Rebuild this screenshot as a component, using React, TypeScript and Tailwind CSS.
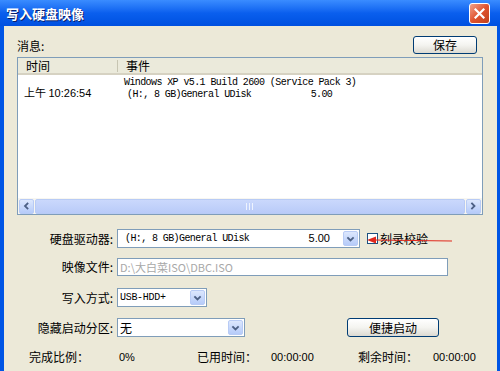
import React from 'react';

const cjk = { fontFamily: '"Noto Sans CJK SC", "Liberation Sans", sans-serif' };
const mono = { fontFamily: '"Liberation Mono", "Noto Sans CJK SC", monospace' };
const tahoma = { fontFamily: '"Liberation Sans", "Noto Sans CJK SC", sans-serif' };

const Chevron = ({ dir = 'down' }: { dir?: 'down' | 'left' | 'right' }) => {
    const d = dir === 'down' ? 'M2 3 L4.5 5.5 L7 3' : dir === 'left' ? 'M5.5 1.5 L3 4 L5.5 6.5' : 'M3 1.5 L5.5 4 L3 6.5';
    return (
        <svg width="9" height="8" viewBox="0 0 9 8">
            <path d={d} fill="none" stroke="#4d6185" strokeWidth="1.8" strokeLinecap="square" />
        </svg>
    );
};

const DropButton = () => (
    <div className="mr-[1px] flex h-[15px] w-[15px] shrink-0 items-center justify-center rounded-[2px] border border-[#b8cbf5] bg-gradient-to-b from-[#dce7fd] to-[#b6cbf9]">
        <Chevron />
    </div>
);

const Combo = ({ width, children }: { width: string; children: React.ReactNode }) => (
    <div className={`flex h-[19px] ${width} items-center border border-[#7f9db9] bg-white pl-[2px]`}>
        <div className="flex flex-1 items-center">{children}</div>
        <DropButton />
    </div>
);

const XPButton = ({ label, className }: { label: string; className: string }) => (
    <div
        style={cjk}
        className={`flex items-center justify-center rounded-[3px] border border-[#003c74] bg-gradient-to-b from-[#ffffff] via-[#f4f4f0] to-[#dcdad2] text-[12px] leading-none text-black ${className}`}
    >
        {label}
    </div>
);

const Label = ({ text }: { text: string }) => (
    <div style={cjk} className="w-[96px] pr-[4px] text-right text-[12px] leading-none text-black">
        {text}
    </div>
);

export default function App() {
    return (
        <div className="flex h-[371px] w-[500px] flex-col overflow-hidden bg-[#0055e5]">
            {/* title bar */}
            <div className="flex h-[26px] shrink-0 items-center bg-gradient-to-b from-[#3a8cff] via-[#0a5fee] to-[#0050e0] pl-[6px] pr-[10px]">
                <span style={cjk} className="text-[13px] font-bold leading-none text-white [text-shadow:1px_1px_0_#0a1e6a]">
                    写入硬盘映像
                </span>
                <div className="ml-auto flex h-[21px] w-[21px] items-center justify-center rounded-[3px] border border-white bg-gradient-to-br from-[#f0a088] via-[#e0532e] to-[#c0401c]">
                    <svg width="11" height="11" viewBox="0 0 11 11">
                        <path d="M1.5 1.5 L9.5 9.5 M9.5 1.5 L1.5 9.5" stroke="white" strokeWidth="2.2" strokeLinecap="square" />
                    </svg>
                </div>
            </div>

            {/* body */}
            <div className="relative ml-[4px] mr-[3px] flex flex-1 flex-col bg-[#ece9d8] pl-[13px]">
                <div className="mt-[10px] flex h-[18px] items-center">
                    <span style={cjk} className="mt-[2px] text-[12px] leading-none text-black">消息:</span>
                    <XPButton label="保存" className="ml-auto mr-[20px] h-[18px] w-[64px]" />
                </div>

                {/* message list */}
                <div className="mt-[3px] flex h-[158px] w-[466px] flex-col border border-[#7f9db9] bg-white">
                    <div style={cjk} className="flex h-[17px] shrink-0 items-center border-b-2 border-[#d6d2c2] bg-[#ebeadb] text-[12px] leading-none text-black">
                        <div className="w-[100px] border-r border-[#c7c5b2] pl-[8px]">时间</div>
                        <div className="pl-[8px]">事件</div>
                    </div>
                    <div className="flex flex-1 pt-[2px] text-black">
                        <div style={cjk} className="w-[106px] pl-[6px] pt-[9px] text-[11px] leading-[12px]">
                            上午 <span style={tahoma}>10:26:54</span>
                        </div>
                        <div style={mono} className="text-[10px] leading-[12px] tracking-[-0.6px] whitespace-pre">
                            <div>Windows XP v5.1 Build 2600 (Service Pack 3)</div>
                            <div className="pl-[3px]">(H:, 8 GB)General UDisk           5.00</div>
                        </div>
                    </div>
                    {/* horizontal scrollbar */}
                    <div className="flex h-[16px] shrink-0 items-center gap-[1px] bg-[#f7f6f1] px-[1px]">
                        <div className="flex h-[15px] w-[15px] items-center justify-center rounded-[2px] border border-[#b8cbf5] bg-gradient-to-b from-[#dce7fd] to-[#b6cbf9]">
                            <Chevron dir="left" />
                        </div>
                        <div className="flex h-[15px] flex-1 items-center justify-center rounded-[2px] border border-[#b8cbf5] bg-gradient-to-b from-[#cad8fc] to-[#b9cbf8]">
                            <svg width="8" height="7" viewBox="0 0 8 7">
                                <path d="M0.5 0 V7 M3.5 0 V7 M6.5 0 V7" stroke="#eef3fe" strokeWidth="1" />
                            </svg>
                        </div>
                        <div className="flex h-[15px] w-[15px] items-center justify-center rounded-[2px] border border-[#b8cbf5] bg-gradient-to-b from-[#dce7fd] to-[#b6cbf9]">
                            <Chevron dir="right" />
                        </div>
                    </div>
                </div>

                {/* form rows */}
                <div className="ml-[-13px] mt-[14px] flex items-center pl-[17px]">
                    <Label text="硬盘驱动器:" />
                    <Combo width="w-[243px]">
                        <span style={mono} className="ml-[5px] text-[10px] leading-none tracking-[-0.6px] whitespace-pre text-black">
                            (H:, 8 GB)General UDisk
                        </span>
                        <span style={tahoma} className="ml-auto mr-[13px] text-[11px] leading-none text-black">5.00</span>
                    </Combo>
                    <div className="ml-[7px] h-[11px] w-[11px] border border-[#1c5180] bg-white" />
                    <span style={cjk} className="ml-[2px] text-[12px] leading-none text-black">刻录校验</span>
                    <svg className="absolute left-[362px] top-[209px]" width="90" height="10" viewBox="0 0 90 10">
                        <path d="M8 5 L86 6" stroke="#e0281c" strokeWidth="1.2" />
                        <path d="M1 5 L10 1.5 L10 8.5 Z" fill="#e0281c" />
                    </svg>
                </div>

                <div className="ml-[-13px] mt-[10px] flex items-center pl-[17px]">
                    <Label text="映像文件:" />
                    <div className="flex h-[18px] w-[331px] items-center border border-[#7f9db9] bg-white pl-[2px]">
                        <span style={cjk} className="text-[11px] leading-none text-[#a8a8a8]">D:\大白菜ISO\DBC.ISO</span>
                    </div>
                </div>

                <div className="ml-[-13px] mt-[12px] flex items-center pl-[17px]">
                    <Label text="写入方式:" />
                    <Combo width="w-[90px]">
                        <span style={mono} className="text-[10px] leading-none tracking-[-0.3px] text-black">USB-HDD+</span>
                    </Combo>
                </div>

                <div className="ml-[-13px] mt-[11px] flex items-center pl-[17px]">
                    <Label text="隐藏启动分区:" />
                    <Combo width="w-[128px]">
                        <span style={cjk} className="text-[12px] leading-none text-black">无</span>
                    </Combo>
                    <XPButton label="便捷启动" className="ml-[102px] h-[19px] w-[92px]" />
                </div>

                <div style={cjk} className="ml-[-13px] mt-[14px] flex items-center pl-[25px] text-[12px] leading-none text-black">
                    <span className="w-[90px]">完成比例：</span>
                    <span style={tahoma} className="w-[78px] text-[11px]">0%</span>
                    <span className="w-[74px]">已用时间：</span>
                    <span style={tahoma} className="w-[87px] text-[11px]">00:00:00</span>
                    <span className="w-[75px]">剩余时间：</span>
                    <span style={tahoma} className="text-[11px]">00:00:00</span>
                </div>
            </div>
        </div>
    );
}
